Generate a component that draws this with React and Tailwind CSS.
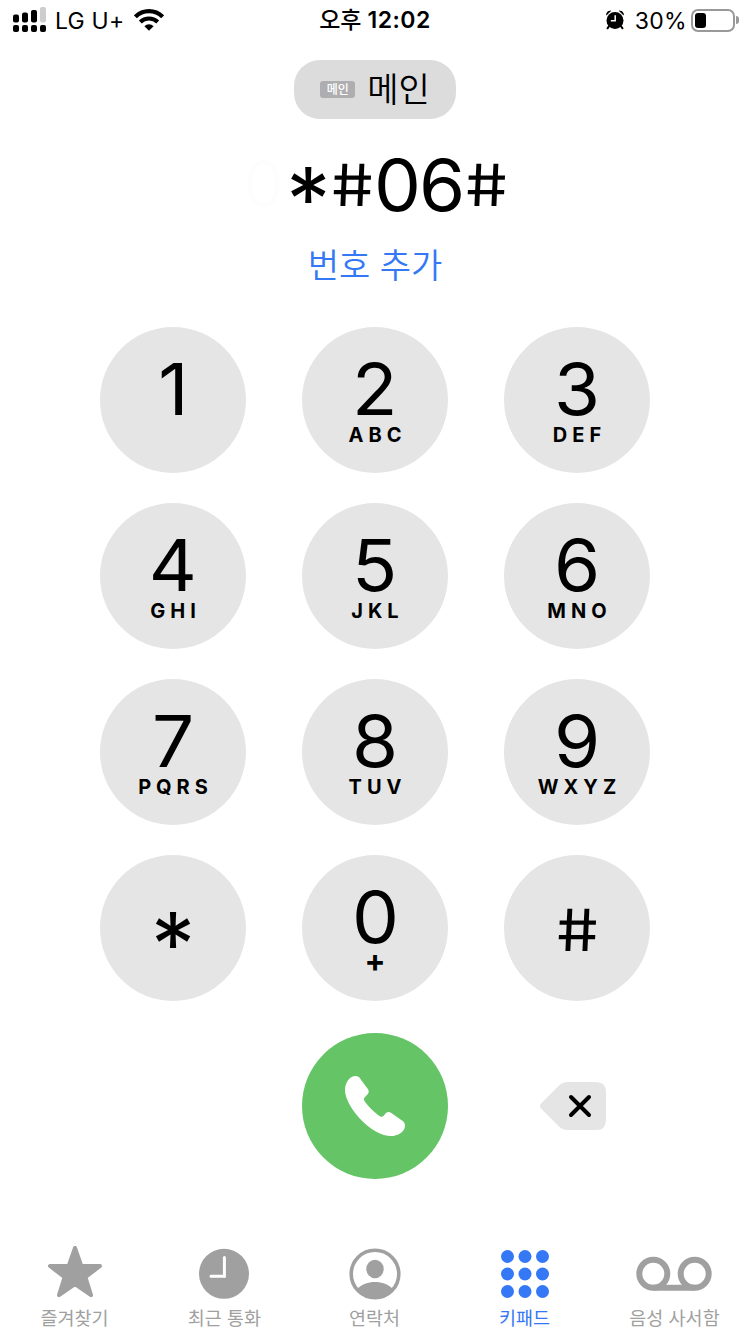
// App.jsx
const KEYS = [
  { digit: "1", letters: "" },
  { digit: "2", letters: "ABC" },
  { digit: "3", letters: "DEF" },
  { digit: "4", letters: "GHI" },
  { digit: "5", letters: "JKL" },
  { digit: "6", letters: "MNO" },
  { digit: "7", letters: "PQRS" },
  { digit: "8", letters: "TUV" },
  { digit: "9", letters: "WXYZ" },
  { digit: "*" },
  { digit: "0", letters: "+" },
  { digit: "#" },
];

const TABS = [
  { label: "즐겨찾기", Icon: StarIcon },
  { label: "최근 통화", Icon: ClockIcon },
  { label: "연락처", Icon: ContactIcon },
  { label: "키패드", Icon: KeypadIcon, active: true },
  { label: "음성 사서함", Icon: VoicemailIcon },
];

function SignalIcon() {
  return (
    <svg width="34" height="26" viewBox="0 0 34 26">
      <rect x="0" y="7.5" width="6" height="8" rx="2" />
      <rect x="9" y="5.5" width="6" height="10" rx="2" />
      <rect x="18" y="3" width="6" height="12.5" rx="2" />
      <rect x="27" y="0" width="6" height="15.5" rx="2" fill="#cdcdcd" />
      <rect x="0" y="18" width="6" height="7" rx="2" />
      <rect x="9" y="18" width="6" height="7" rx="2" />
      <rect x="18" y="18" width="6" height="7" rx="2" />
      <rect x="27" y="18" width="6" height="7" rx="2" />
    </svg>
  );
}

function WifiIcon() {
  return (
    <svg width="30" height="22" viewBox="0 0 30 22">
      <path d="M1.4 7.8a19.2 19.2 0 0 1 27.2 0" fill="none" stroke="#000" strokeWidth="4.2" />
      <path d="M6.3 13a12.3 12.3 0 0 1 17.4 0" fill="none" stroke="#000" strokeWidth="4" />
      <path d="M15 21.8l-4.6-4.6a6.5 6.5 0 0 1 9.2 0z" />
    </svg>
  );
}

function AlarmIcon() {
  return (
    <svg width="20" height="20" viewBox="0 0 20 20">
      <path d="M1.5 4.8A4 4 0 0 1 5.5 1zM18.5 4.8A4 4 0 0 0 14.5 1z" stroke="#000" strokeLinejoin="round" />
      <path d="M4.5 15.5l-2 2.8M15.5 15.5l2 2.8" stroke="#000" strokeWidth="2" strokeLinecap="round" />
      <circle cx="10" cy="10.4" r="8.5" />
      <path d="M10.2 5.2v5.5H5.8" fill="none" stroke="#fff" strokeWidth="1.5" />
    </svg>
  );
}

function StarIcon() {
  return (
    <svg width="56" height="54" viewBox="0 0 56 54">
      <path
        d="M28 2L34.3 20H53L38.4 31.2L44 49.2L28 38.2L12 49.2L17.6 31.2L3 20H21.7Z"
        fill="currentColor"
        stroke="currentColor"
        strokeWidth="4"
        strokeLinejoin="round"
      />
    </svg>
  );
}

function ClockIcon() {
  return (
    <svg width="52" height="54" viewBox="0 0 52 54">
      <circle cx="25" cy="27.8" r="25" fill="currentColor" />
      <path d="M25.4 11.5V30.3H12" fill="none" stroke="#fff" strokeWidth="3" strokeLinecap="round" />
    </svg>
  );
}

function ContactIcon() {
  return (
    <svg width="52" height="54" viewBox="0 0 52 54">
      <circle cx="26" cy="28" r="23.8" fill="none" stroke="currentColor" strokeWidth="3.6" />
      <ellipse cx="26" cy="23" rx="8.7" ry="9.3" fill="currentColor" />
      <path d="M8 43C12.5 38.5 19 36 26 36s13.5 2.5 18 7A23.8 23.8 0 0 1 8 43z" fill="currentColor" />
    </svg>
  );
}

function KeypadIcon() {
  const steps = [0, 17.5, 35];
  return (
    <svg width="50" height="54" viewBox="0 0 50 54">
      {steps.map((y) =>
        steps.map((x) => (
          <circle key={`${x}-${y}`} cx={7.5 + x} cy={10.5 + y} r="6.5" fill="currentColor" />
        ))
      )}
    </svg>
  );
}

function VoicemailIcon() {
  return (
    <svg width="78" height="54" viewBox="0 0 78 54" fill="none" stroke="currentColor" strokeWidth="6">
      <circle cx="17.3" cy="27.8" r="14" />
      <circle cx="58.7" cy="27.8" r="14" />
      <path d="M17.3 41.8H58.7" />
    </svg>
  );
}

function StatusBar() {
  return (
    <header className="grid h-10 shrink-0 grid-cols-3 pl-3.25 pr-2.75 text-[23px] leading-none">
      <div className="flex items-center">
        <SignalIcon />
        <span className="ml-2 mr-2.5 pt-0.5 tracking-[0.2px]">LG U+</span>
        <WifiIcon />
      </div>
      <div className="flex items-center justify-center pt-px pr-0.5 font-semibold">
        <span className="text-[23px] font-medium">오후</span>
        <span className="ml-1.5 tracking-[0.5px]">12:02</span>
      </div>
      <div className="flex items-center justify-end">
        <AlarmIcon />
        <span className="ml-2.5 mr-1 pt-0.5 tracking-[0.3px]">30%</span>
        <div className="flex h-[23px] w-11 items-center rounded-[7px] border-2 border-[#999] pl-0.5">
          <div className="h-[15px] w-[11px] rounded-[3px] bg-black" />
        </div>
        <div className="ml-px h-2 w-[3px] rounded-r-full bg-[#999]" />
      </div>
    </header>
  );
}

// *, # 은 숫자보다 작고 세로 중앙에 놓인다
function Glyph({ char }) {
  if (char === "*") {
    return <span className="inline-block translate-y-[15px] text-[88px] leading-[72px]">*</span>;
  }
  if (char === "#") {
    return (
      <span className="inline-block translate-y-px scale-x-115 skew-x-[7deg] text-[58px] leading-[72px]">
        #
      </span>
    );
  }
  return <span className="inline-block translate-y-px scale-x-105 text-[71px] leading-[72px]">{char}</span>;
}

function Key({ digit, letters }) {
  if (letters === undefined) {
    return (
      <button className="flex size-[146px] items-center justify-center rounded-full bg-[#e5e5e5] pt-0.5">
        <Glyph char={digit} />
      </button>
    );
  }
  return (
    <button className="flex size-[146px] flex-col items-center rounded-full bg-[#e5e5e5] pt-[25px]">
      <Glyph char={digit} />
      {letters === "+" ? (
        <span className="text-[31px] leading-[17px] font-bold">+</span>
      ) : (
        <span className="pl-[5px] text-[20px] leading-[22px] font-bold tracking-[5px]">{letters}</span>
      )}
    </button>
  );
}

export default function App() {
  return (
    <div className="flex h-[1334px] w-[750px] flex-col overflow-hidden bg-white font-['Inter','Noto_Sans_CJK_KR',sans-serif] text-black">
      <StatusBar />

      {/* 회선 선택 */}
      <div className="mt-5 flex h-[59px] w-[162px] shrink-0 items-center justify-center gap-3 self-center rounded-[26px] bg-[#dcdcdc]">
        <span className="flex h-[17px] w-[35px] items-center justify-center rounded-[3px] bg-[#aeaeb0] text-[12px] leading-none font-medium text-white">
          메인
        </span>
        <span className="text-[34px] leading-none font-[350]">메인</span>
      </div>

      {/* 입력된 번호 - 맨 앞 글자는 사라지는 중 */}
      <div className="mt-[29px] flex h-[72px] shrink-0 items-center justify-center">
        <span className="w-[44.5px] text-center text-[64px] leading-[72px] font-light text-[#fdfdfd]">0</span>
        {[..."*#06#"].map((char, i) => (
          <span key={i} className="flex w-[44.5px] justify-center">
            <Glyph char={char} />
          </span>
        ))}
      </div>
      <button className="mt-[26px] h-10 shrink-0 self-center text-[34px] leading-10 font-[350] text-[#3478f6]">
        번호 추가
      </button>

      <main className="mt-[41px] grid shrink-0 grid-cols-[repeat(3,146px)] justify-center gap-x-14 gap-y-[30px]">
        {KEYS.map((k) => (
          <Key key={k.digit} {...k} />
        ))}
      </main>

      <div className="mt-8 grid shrink-0 grid-cols-[repeat(3,146px)] items-center justify-center gap-x-14">
        <button className="col-start-2 flex size-[146px] items-center justify-center rounded-full bg-[#65c466]">
          <svg width="60" height="60" viewBox="0 0 180 180" fill="#fff">
            <path d="M0 42C0 22 12 0 32 0C38 0 43 3 46 8L69 40C72 45 72 50 68 55L60 63C56 67 56 72 59 76C70 92 86 108 102 119C107 123 112 123 116 119L122 112C127 107 133 107 139 111L172 134C178 138 180 143 180 149C180 167 158 180 138 180C112 180 74 160 45 128C18 99 0 66 0 42Z" />
          </svg>
        </button>
        <button className="pl-9">
          <svg width="66" height="48" viewBox="0 0 66 48">
            <path
              d="M1 21.5L19 3.5Q22.5 0 28 0H56Q66 0 66 10V38Q66 48 56 48H28Q22.5 48 19 44.5L1 26.5Q-1 24 1 21.5Z"
              fill="#e5e5e5"
            />
            <path d="M31 15L49 33M49 15L31 33" stroke="#000" strokeWidth="4" strokeLinecap="round" />
          </svg>
        </button>
      </div>

      <nav className="mt-[67px] grid shrink-0 grid-cols-5">
        {TABS.map(({ label, Icon, active }) => (
          <a
            key={label}
            className={`flex flex-col items-center ${active ? "text-[#3478f6]" : "text-[#a0a0a0]"}`}
          >
            <Icon />
            <span className="mt-1.5 pr-px text-[18.5px] leading-6">{label}</span>
          </a>
        ))}
      </nav>
    </div>
  );
}
